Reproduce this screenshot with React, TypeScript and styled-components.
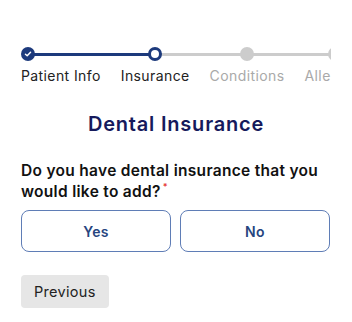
import React from "react";
import styled, { createGlobalStyle, css } from "styled-components";

const GlobalStyle = createGlobalStyle`
  html, body { margin: 0; padding: 0; background: #ffffff; }
  body { font-family: Inter, "Noto Sans", "Liberation Sans", sans-serif; color: #1f1f1f; }
  * { box-sizing: border-box; }
`;

const BLUE = "#1d3a7c";
const GREY = "#cccccc";

const Page = styled.div`
  width: 352px;
  padding: 47px 21px 12px 21px;
  display: flex;
  flex-direction: column;
`;

const Stepper = styled.div`
  display: flex;
  gap: 20px;
  width: 310px;
  overflow: hidden;
`;

type Tone = "blue" | "grey" | "none";

const Step = styled.div<{ $first?: boolean }>`
  display: flex;
  flex-direction: column;
  align-items: ${(p) => (p.$first ? "flex-start" : "center")};
  flex-shrink: 0;
`;

const lineCss = (tone: Tone) =>
  tone === "none" ? "display: none;" : `background: ${tone === "blue" ? BLUE : GREY};`;

const Marker = styled.div<{ $left: Tone; $right: Tone; $first?: boolean }>`
  position: relative;
  width: 100%;
  height: 14px;
  display: flex;
  justify-content: ${(p) => (p.$first ? "flex-start" : "center")};
  &::before,
  &::after {
    content: "";
    position: absolute;
    top: 5.5px;
    height: 3px;
  }
  &::before {
    left: -10px;
    right: 50%;
    ${(p) => lineCss(p.$left)}
  }
  &::after {
    ${(p) => (p.$first ? "left: 7px;" : "left: 50%;")}
    right: -10px;
    ${(p) => lineCss(p.$right)}
  }
`;

const Dot = styled.div<{ $state: "done" | "current" | "todo" }>`
  position: relative;
  z-index: 1;
  width: 14px;
  height: 14px;
  border-radius: 50%;
  display: flex;
  align-items: center;
  justify-content: center;
  ${(p) =>
    p.$state === "done"
      ? css`background: ${BLUE};`
      : p.$state === "current"
      ? css`background: #ffffff; border: 3px solid ${BLUE};`
      : css`background: ${GREY};`}
`;

const StepLabel = styled.div<{ $active: boolean }>`
  margin-top: 5px;
  font-size: 14px;
  line-height: 20px;
  letter-spacing: 0.4px;
  white-space: nowrap;
  color: ${(p) => (p.$active ? "#222222" : "#a9a9a9")};
`;

const Title = styled.h1`
  margin: 24px 0 0 0;
  text-align: center;
  font-size: 20px;
  line-height: 28px;
  font-weight: 600;
  letter-spacing: 0.8px;
  color: #161a5c;
`;

const Question = styled.p`
  margin: 22px 0 0 0;
  font-size: 15.5px;
  line-height: 21px;
  font-weight: 600;
  letter-spacing: 0.3px;
  color: #111111;
`;

const Required = styled.span`
  display: inline-block;
  color: #e53935;
  font-size: 9px;
  line-height: 9px;
  margin-left: 2px;
  vertical-align: 7px;
`;

const Choices = styled.div`
  margin-top: 8px;
  display: grid;
  grid-template-columns: 1fr 1fr;
  gap: 9px;
  padding-right: 1px;
`;

const Choice = styled.button`
  height: 42px;
  border: 1.5px solid #5f7db6;
  border-radius: 8px;
  background: #ffffff;
  color: #27457f;
  font-family: inherit;
  font-size: 14px;
  font-weight: 600;
  letter-spacing: 0.3px;
  cursor: pointer;
`;

const Footer = styled.div`
  margin-top: 23px;
  display: flex;
`;

const PrevButton = styled.button`
  height: 33px;
  padding: 0 13px;
  border: none;
  border-radius: 4px;
  background: #e6e6e6;
  color: #222222;
  font-family: inherit;
  font-size: 14.5px;
  font-weight: 400;
  letter-spacing: 0.3px;
  cursor: pointer;
`;

const Check = () => (
  <svg width="8" height="8" viewBox="0 0 10 10" fill="none">
    <path d="M1.8 5.2 L4 7.2 L8.2 2.8" stroke="#ffffff" strokeWidth="1.8" strokeLinecap="round" strokeLinejoin="round" />
  </svg>
);

const steps: { label: string; state: "done" | "current" | "todo"; left: Tone; right: Tone }[] = [
  { label: "Patient Info", state: "done", left: "none", right: "blue" },
  { label: "Insurance", state: "current", left: "blue", right: "grey" },
  { label: "Conditions", state: "todo", left: "grey", right: "grey" },
  { label: "Allergies", state: "todo", left: "grey", right: "grey" },
];

export default function App() {
  return (
    <>
      <GlobalStyle />
      <Page>
        <Stepper>
          {steps.map((s, i) => (
            <Step key={s.label} $first={i === 0}>
              <Marker $left={s.left} $right={s.right} $first={i === 0}>
                <Dot $state={s.state}>{s.state === "done" && <Check />}</Dot>
              </Marker>
              <StepLabel $active={s.state !== "todo"}>{s.label}</StepLabel>
            </Step>
          ))}
        </Stepper>
        <Title>Dental Insurance</Title>
        <Question>
          Do you have dental insurance that you would like to add?<Required>*</Required>
        </Question>
        <Choices>
          <Choice>Yes</Choice>
          <Choice>No</Choice>
        </Choices>
        <Footer>
          <PrevButton>Previous</PrevButton>
        </Footer>
      </Page>
    </>
  );
}
